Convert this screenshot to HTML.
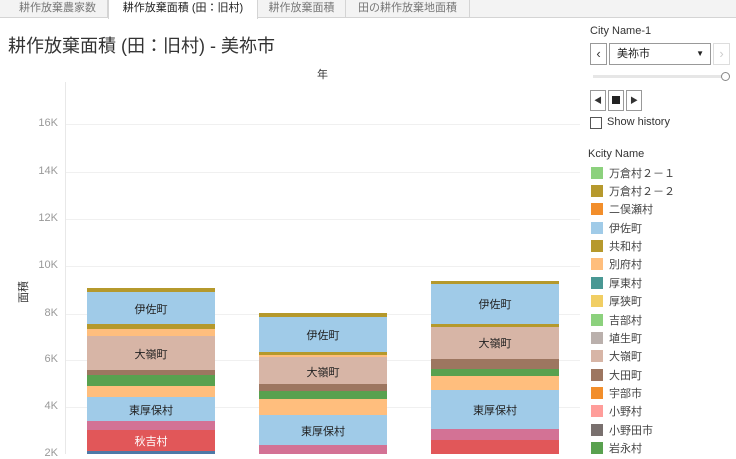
<!DOCTYPE html>
<html><head><meta charset="utf-8"><style>
*{margin:0;padding:0;box-sizing:border-box}
body{width:736px;height:454px;overflow:hidden;background:#fff;font-family:"Liberation Sans","Noto Sans CJK JP",sans-serif;position:relative;color:#333}
.a{position:absolute}
.tab{position:absolute;top:0;height:18px;font-size:11px;color:#777;line-height:17px;text-align:center;border-right:1px solid #d4d4d4}
.tick{position:absolute;left:20px;width:38px;text-align:right;font-size:11px;color:#999}
.grid{position:absolute;left:66px;width:514px;height:1px;background:#f0f0f0}
.seg{position:absolute;width:128px}
.lbl{position:absolute;width:128px;text-align:center;font-size:11px;color:#222}
.lg{position:absolute;left:591px;width:12px;height:12px}
.lt{position:absolute;left:609px;font-size:11px;color:#444}
.btn{position:absolute;border:1px solid #999;background:#fff}
</style></head><body>
<div class="a" style="left:0;top:0;width:736px;height:18px;background:#f3f3f3;border-bottom:1px solid #d4d4d4"></div>
<div class="tab" style="left:8px;width:100px">耕作放棄農家数</div>
<div class="tab" style="left:108px;width:150px;background:#fff;color:#222;height:19px;border-left:1px solid #d4d4d4">耕作放棄面積 (田：旧村)</div>
<div class="tab" style="left:258px;width:88px">耕作放棄面積</div>
<div class="tab" style="left:346px;width:124px">田の耕作放棄地面積</div>
<div class="a" style="left:8px;top:32px;font-size:18px;color:#333">耕作放棄面積 (田：旧村) - 美祢市</div>
<div class="a" style="left:317px;top:66px;font-size:11px;color:#333">年</div>
<div class="a" style="left:65px;top:82px;width:1px;height:372px;background:#e8e8e8"></div>
<div class="grid" style="top:124px"></div><div class="grid" style="top:172px"></div><div class="grid" style="top:219px"></div><div class="grid" style="top:266px"></div><div class="grid" style="top:314px"></div><div class="grid" style="top:360px"></div><div class="grid" style="top:407px"></div>
<div class="tick" style="top:117px">16K</div><div class="tick" style="top:165px">14K</div><div class="tick" style="top:212px">12K</div><div class="tick" style="top:259px">10K</div><div class="tick" style="top:307px">8K</div><div class="tick" style="top:353px">6K</div><div class="tick" style="top:400px">4K</div><div class="tick" style="top:447px">2K</div>
<div class="a" style="left:12px;top:284px;font-size:11px;transform:rotate(-90deg);transform-origin:center;color:#333">面積</div>

<!-- bar1 -->
<div class="seg" style="left:87px;top:288px;height:4px;background:#b5992c"></div>
<div class="seg" style="left:87px;top:292px;height:32px;background:#a0cbe8"></div>
<div class="seg" style="left:87px;top:324px;height:5px;background:#b5992c"></div>
<div class="seg" style="left:87px;top:329px;height:7px;background:#ffbe7d"></div>
<div class="seg" style="left:87px;top:336px;height:34px;background:#d7b5a6"></div>
<div class="seg" style="left:87px;top:370px;height:5px;background:#9d7660"></div>
<div class="seg" style="left:87px;top:375px;height:11px;background:#59a14f"></div>
<div class="seg" style="left:87px;top:386px;height:11px;background:#ffbe7d"></div>
<div class="seg" style="left:87px;top:397px;height:24px;background:#a0cbe8"></div>
<div class="seg" style="left:87px;top:421px;height:9px;background:#d37295"></div>
<div class="seg" style="left:87px;top:430px;height:21px;background:#e15759"></div>
<div class="seg" style="left:87px;top:451px;height:3px;background:#4e79a7"></div>
<div class="lbl" style="left:87px;top:301px">伊佐町</div>
<div class="lbl" style="left:87px;top:346px">大嶺町</div>
<div class="lbl" style="left:87px;top:402px">東厚保村</div>
<div class="lbl" style="left:87px;top:433px;color:#fff">秋吉村</div>
<!-- bar2 -->
<div class="seg" style="left:259px;top:313px;height:4px;background:#b5992c"></div>
<div class="seg" style="left:259px;top:317px;height:35px;background:#a0cbe8"></div>
<div class="seg" style="left:259px;top:352px;height:3px;background:#b5992c"></div>
<div class="seg" style="left:259px;top:355px;height:2px;background:#ffbe7d"></div>
<div class="seg" style="left:259px;top:357px;height:27px;background:#d7b5a6"></div>
<div class="seg" style="left:259px;top:384px;height:7px;background:#9d7660"></div>
<div class="seg" style="left:259px;top:391px;height:8px;background:#59a14f"></div>
<div class="seg" style="left:259px;top:399px;height:16px;background:#ffbe7d"></div>
<div class="seg" style="left:259px;top:415px;height:30px;background:#a0cbe8"></div>
<div class="seg" style="left:259px;top:445px;height:9px;background:#d37295"></div>
<div class="lbl" style="left:259px;top:327px">伊佐町</div>
<div class="lbl" style="left:259px;top:364px">大嶺町</div>
<div class="lbl" style="left:259px;top:423px">東厚保村</div>
<!-- bar3 -->
<div class="seg" style="left:431px;top:281px;height:3px;background:#b5992c"></div>
<div class="seg" style="left:431px;top:284px;height:40px;background:#a0cbe8"></div>
<div class="seg" style="left:431px;top:324px;height:3px;background:#b5992c"></div>
<div class="seg" style="left:431px;top:327px;height:32px;background:#d7b5a6"></div>
<div class="seg" style="left:431px;top:359px;height:10px;background:#9d7660"></div>
<div class="seg" style="left:431px;top:369px;height:7px;background:#59a14f"></div>
<div class="seg" style="left:431px;top:376px;height:14px;background:#ffbe7d"></div>
<div class="seg" style="left:431px;top:390px;height:39px;background:#a0cbe8"></div>
<div class="seg" style="left:431px;top:429px;height:11px;background:#d37295"></div>
<div class="seg" style="left:431px;top:440px;height:14px;background:#e15759"></div>
<div class="lbl" style="left:431px;top:296px">伊佐町</div>
<div class="lbl" style="left:431px;top:335px">大嶺町</div>
<div class="lbl" style="left:431px;top:402px">東厚保村</div>

<!-- right panel -->
<div class="a" style="left:590px;top:25px;font-size:11px;color:#333">City Name-1</div>
<div class="btn" style="left:590px;top:43px;width:17px;height:22px;font-size:13px;line-height:19px;text-align:center;color:#333">‹</div>
<div class="btn" style="left:609px;top:43px;width:102px;height:22px;font-size:11px;line-height:20px;padding-left:7px;color:#222">美祢市<span style="position:absolute;right:6px;top:0;font-size:8px">▼</span></div>
<div class="btn" style="left:713px;top:43px;width:17px;height:22px;font-size:13px;line-height:19px;text-align:center;color:#ccc;border-color:#ddd">›</div>
<div class="a" style="left:593px;top:75px;width:129px;height:3px;background:#e6e6e6"></div>
<div class="a" style="left:721px;top:72px;width:9px;height:9px;border:1px solid #888;border-radius:50%;background:#fff"></div>
<div class="btn" style="left:590px;top:90px;width:16px;height:21px;font-size:8px;line-height:19px;text-align:center">◀</div>
<div class="btn" style="left:608px;top:90px;width:16px;height:21px"><div class="a" style="left:3px;top:5px;width:8px;height:8px;background:#222"></div></div>
<div class="btn" style="left:626px;top:90px;width:16px;height:21px;font-size:8px;line-height:19px;text-align:center">▶</div>
<div class="a" style="left:590px;top:117px;width:12px;height:12px;border:1px solid #555;background:#fff"></div>
<div class="a" style="left:607px;top:116px;font-size:11px;color:#333">Show history</div>
<div class="a" style="left:588px;top:148px;font-size:11px;color:#333">Kcity Name</div>

<div class="lg" style="top:167px;background:#8cd17d"></div><div class="lt" style="top:165px">万倉村２－１</div>
<div class="lg" style="top:185px;background:#b6992d"></div><div class="lt" style="top:183px">万倉村２－２</div>
<div class="lg" style="top:203px;background:#f28e2b"></div><div class="lt" style="top:201px">二俣瀬村</div>
<div class="lg" style="top:222px;background:#a0cbe8"></div><div class="lt" style="top:220px">伊佐町</div>
<div class="lg" style="top:240px;background:#b6992d"></div><div class="lt" style="top:238px">共和村</div>
<div class="lg" style="top:258px;background:#ffbe7d"></div><div class="lt" style="top:256px">別府村</div>
<div class="lg" style="top:277px;background:#499894"></div><div class="lt" style="top:275px">厚東村</div>
<div class="lg" style="top:295px;background:#f1ce63"></div><div class="lt" style="top:293px">厚狭町</div>
<div class="lg" style="top:314px;background:#8cd17d"></div><div class="lt" style="top:312px">吉部村</div>
<div class="lg" style="top:332px;background:#bab0ac"></div><div class="lt" style="top:330px">埴生町</div>
<div class="lg" style="top:350px;background:#d7b5a6"></div><div class="lt" style="top:348px">大嶺町</div>
<div class="lg" style="top:369px;background:#9d7660"></div><div class="lt" style="top:367px">大田町</div>
<div class="lg" style="top:387px;background:#f28e2b"></div><div class="lt" style="top:385px">宇部市</div>
<div class="lg" style="top:405px;background:#ff9d9a"></div><div class="lt" style="top:403px">小野村</div>
<div class="lg" style="top:424px;background:#79706e"></div><div class="lt" style="top:422px">小野田市</div>
<div class="lg" style="top:442px;background:#59a14f"></div><div class="lt" style="top:440px">岩永村</div>
</body></html>
